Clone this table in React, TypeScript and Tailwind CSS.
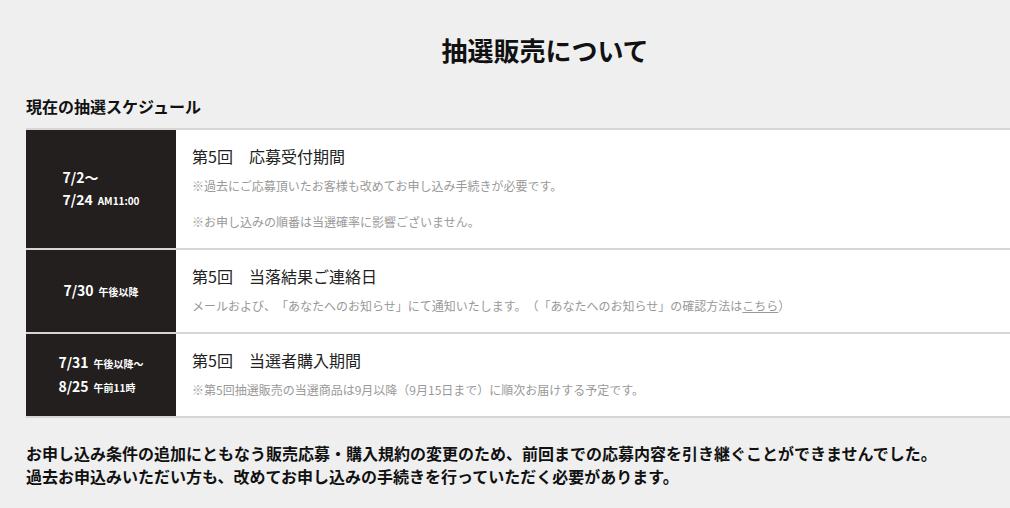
const FONT = "font-['Noto_Sans_CJK_JP','Noto_Sans',sans-serif] [text-spacing-trim:space-all]";

type Row = {
  dates: { main: string; sub?: string }[];
  title: string;
  notes: React.ReactNode[];
};

const rows: Row[] = [
  {
    dates: [{ main: "7/2〜" }, { main: "7/24", sub: "AM11:00" }],
    title: "第5回　応募受付期間",
    notes: [
      "※過去にご応募頂いたお客様も改めてお申し込み手続きが必要です。",
      "※お申し込みの順番は当選確率に影響ございません。",
    ],
  },
  {
    dates: [{ main: "7/30", sub: "午後以降" }],
    title: "第5回　当落結果ご連絡日",
    notes: [
      <>
        メールおよび、「あなたへのお知らせ」にて通知いたします。（「あなたへのお知らせ」の確認方法は
        <a href="#" className="underline">
          こちら
        </a>
        ）
      </>,
    ],
  },
  {
    dates: [
      { main: "7/31", sub: "午後以降〜" },
      { main: "8/25", sub: "午前11時" },
    ],
    title: "第5回　当選者購入期間",
    notes: ["※第5回抽選販売の当選商品は9月以降（9月15日まで）に順次お届けする予定です。"],
  },
];

function ScheduleRow({ row }: { row: Row }) {
  return (
    <div className="flex border-b-2 border-[#dad5d5]">
      <div className="flex w-[150px] shrink-0 items-center justify-center bg-[#231f1f]">
        <div className="text-left text-white">
          {row.dates.map((d, i) => (
            <p key={i} className="text-[14px] font-bold leading-[22px]">
              {d.main}
              {d.sub ? <span className="ml-[5px] text-[10px]">{d.sub}</span> : null}
            </p>
          ))}
        </div>
      </div>
      <div className="flex-1 bg-white px-4 pt-[14px] pb-4">
        <p className="text-[16px] leading-6 text-[#222]">{row.title}</p>
        {row.notes.map((n, i) => (
          <p
            key={i}
            className={`text-[12px] leading-5 text-[#999] ${i === 0 ? "mt-2" : "mt-4"}`}
          >
            {n}
          </p>
        ))}
      </div>
    </div>
  );
}

export default function App() {
  return (
    <main className={`min-h-[508px] w-full overflow-hidden bg-[#efefef] ${FONT}`}>
      <div className="ml-[26px] w-[1038px] pt-[32px]">
        <h1 className="text-center text-[26px] font-bold leading-9 text-[#111]">
          抽選販売について
        </h1>
        <h2 className="mt-[26px] text-[16px] font-bold leading-6 text-[#111]">
          現在の抽選スケジュール
        </h2>
        <div className="mt-[10px] border-t-2 border-[#dad5d5]">
          {rows.map((row, i) => (
            <ScheduleRow key={i} row={row} />
          ))}
        </div>
        <div className="mt-[24px] text-[16px] font-bold leading-[23px] text-[#111]">
          <p>
            お申し込み条件の追加にともなう販売応募・購入規約の変更のため、前回までの応募内容を引き継ぐことができませんでした。
          </p>
          <p>過去お申込みいただい方も、改めてお申し込みの手続きを行っていただく必要があります。</p>
        </div>
      </div>
    </main>
  );
}
